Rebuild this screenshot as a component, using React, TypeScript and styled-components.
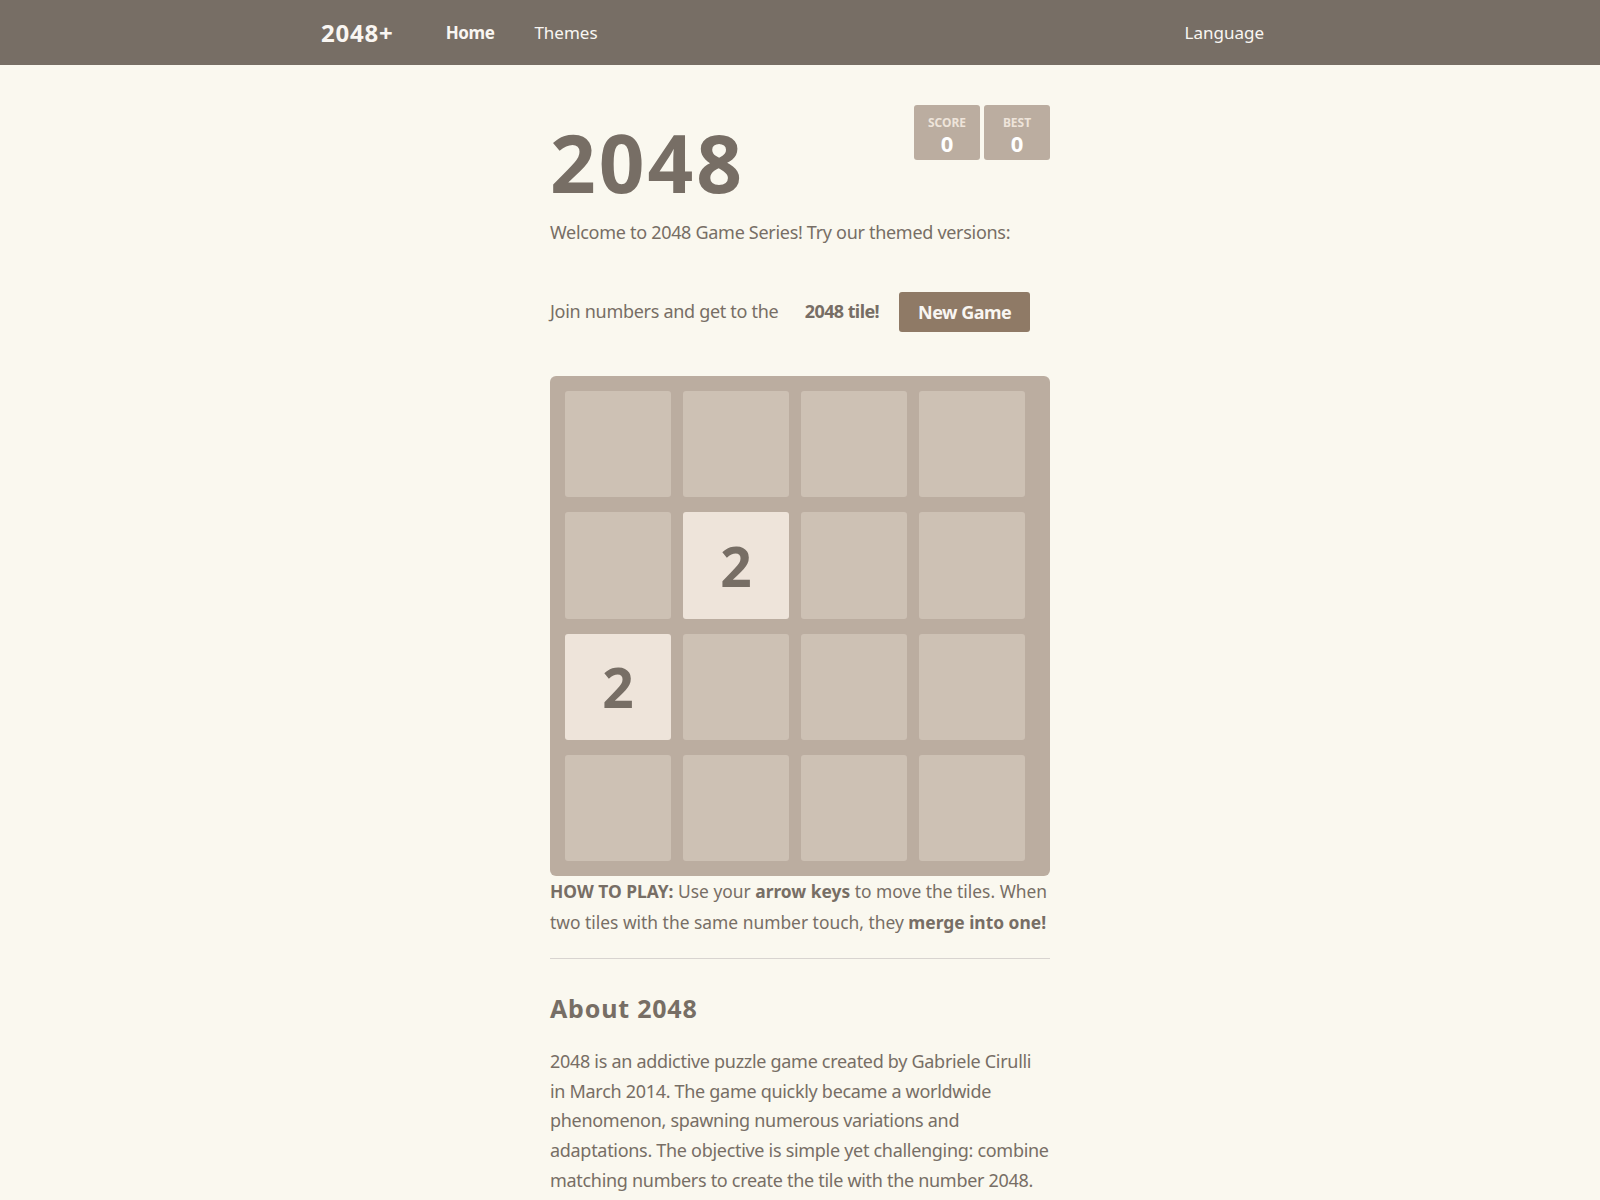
import styled, {createGlobalStyle} from "styled-components";

const GlobalStyle = createGlobalStyle`
    html, body {
        margin: 0;
        padding: 0;
        background: #faf8ef;
        color: #776e65;
        font-family: "Noto Sans", "DejaVu Sans", sans-serif;
        font-size: 18px;
    }

    * {
        box-sizing: border-box;
    }
`

// 0 = empty cell, otherwise the tile value
const BOARD: number[][] = [
    [0, 0, 0, 0],
    [0, 2, 0, 0],
    [2, 0, 0, 0],
    [0, 0, 0, 0],
]

const App = () => {
    return (
        <>
            <GlobalStyle/>
            <StyledNavBar>
                <StyledNavInner>
                    <StyledLogo>2048+</StyledLogo>
                    <StyledNavLinks>
                        <StyledNavLink $active={true}>Home</StyledNavLink>
                        <StyledNavLink $active={false}>Themes</StyledNavLink>
                    </StyledNavLinks>
                    <StyledLangLink>Language</StyledLangLink>
                </StyledNavInner>
            </StyledNavBar>

            <StyledContainer>
                <StyledHeading>
                    <StyledTitle>2048</StyledTitle>
                    <StyledScores>
                        <StyledScoreBox>
                            <StyledScoreLabel>SCORE</StyledScoreLabel>
                            <StyledScoreValue>0</StyledScoreValue>
                        </StyledScoreBox>
                        <StyledScoreBox>
                            <StyledScoreLabel>BEST</StyledScoreLabel>
                            <StyledScoreValue>0</StyledScoreValue>
                        </StyledScoreBox>
                    </StyledScores>
                </StyledHeading>

                <StyledWelcome>Welcome to 2048 Game Series! Try our themed versions:</StyledWelcome>

                <StyledAboveGame>
                    <StyledIntro>
                        Join numbers and get to the <strong>2048 tile!</strong>
                    </StyledIntro>
                    <StyledNewGameBtn>New Game</StyledNewGameBtn>
                </StyledAboveGame>

                <StyledBoard>
                    {
                        BOARD.flat().map((value, idx) => (
                            <StyledCell key={idx} $value={value}>{value > 0 ? value : ""}</StyledCell>
                        ))
                    }
                </StyledBoard>

                <StyledExplanation>
                    <strong>HOW TO PLAY:</strong> Use your <strong>arrow keys</strong> to move the tiles. When two
                    tiles with the same number touch, they <strong>merge into one!</strong>
                </StyledExplanation>

                <StyledDivider/>

                <StyledSectionTitle>About 2048</StyledSectionTitle>
                <StyledParagraph>
                    2048 is an addictive puzzle game created by Gabriele Cirulli in March 2014. The game quickly
                    became a worldwide phenomenon, spawning numerous variations and adaptations. The objective is
                    simple yet challenging: combine matching numbers to create the tile with the number 2048.
                </StyledParagraph>
            </StyledContainer>
        </>
    )
}

export default App

const StyledNavBar = styled.nav`
    width: 100%;
    height: 65px;
    background: #776e65;
`

const StyledNavInner = styled.div`
    display: flex;
    align-items: center;
    width: 960px;
    height: 100%;
    margin: 0 auto;
`

const StyledLogo = styled.div`
    font-size: 24px;
    font-weight: 700;
    letter-spacing: 0.8px;
    color: #f9f6f2;
    margin-left: 1px;
    margin-right: 32px;
`

const StyledNavLinks = styled.div`
    display: flex;
    align-items: center;
    flex: 1;
`

const StyledNavLink = styled.a<{ $active: boolean }>`
    padding: 0 20px;
    font-size: 17px;
    font-weight: ${(props) => props.$active ? 700 : 400};
    letter-spacing: ${(props) => props.$active ? "-0.4px" : "0"};
    color: #f9f6f2;
    cursor: pointer;
`

const StyledLangLink = styled.a`
    padding: 0 16px;
    font-size: 17px;
    color: #f9f6f2;
    cursor: pointer;
`

const StyledContainer = styled.main`
    width: 500px;
    margin: 40px auto 0;
    letter-spacing: -0.3px;
`

const StyledHeading = styled.div`
    display: flex;
    justify-content: space-between;
    align-items: flex-start;
`

const StyledTitle = styled.h1`
    margin: 17px 0 0;
    font-size: 80px;
    font-weight: 700;
    line-height: 1;
    letter-spacing: 3px;
`

const StyledScores = styled.div`
    display: flex;
    gap: 4px;
    letter-spacing: 0;
`

const StyledScoreBox = styled.div`
    display: flex;
    flex-direction: column;
    align-items: center;
    width: 66px;
    height: 55px;
    padding-top: 11px;
    background: #bbada0;
    border-radius: 3px;
`

const StyledScoreLabel = styled.div`
    font-size: 12px;
    font-weight: 700;
    line-height: 14px;
    color: #eee4da;
`

const StyledScoreValue = styled.div`
    font-size: 22px;
    font-weight: 700;
    line-height: 26px;
    color: #ffffff;
`

const StyledWelcome = styled.p`
    margin: 15px 0 0;
    line-height: 30px;
`

const StyledAboveGame = styled.div`
    display: flex;
    align-items: center;
    margin-top: 45px;
    white-space: nowrap;
`

const StyledIntro = styled.p`
    margin: 0 0 3px;
    line-height: 30px;

    strong {
        margin-left: 22px;
        font-weight: 700;
        letter-spacing: -0.6px;
    }
`

const StyledNewGameBtn = styled.button`
    height: 40px;
    margin-left: 20px;
    padding: 0 19px;
    border: none;
    border-radius: 3px;
    background: #8f7a66;
    color: #f9f6f2;
    font-family: inherit;
    font-size: 18px;
    font-weight: 700;
    letter-spacing: -0.5px;
    cursor: pointer;
`

const StyledBoard = styled.div`
    display: grid;
    grid-template-columns: repeat(4, 106px);
    grid-auto-rows: 106.25px;
    column-gap: 12px;
    row-gap: 15px;
    width: 500px;
    height: 500px;
    margin-top: 44px;
    padding: 15px;
    background: #bbada0;
    border-radius: 6px;
`

const StyledCell = styled.div<{ $value: number }>`
    display: flex;
    align-items: center;
    justify-content: center;
    border-radius: 3px;
    background: ${(props) => props.$value === 2 ? "#eee4da" : "#cdc1b4"};
    font-size: 55px;
    font-weight: 700;
    letter-spacing: 0;
    color: #776e65;
`

const StyledExplanation = styled.p`
    margin: 0;
    font-size: 17.4px;
    line-height: 31px;
    letter-spacing: 0;

    strong {
        font-weight: 700;
    }
`

const StyledDivider = styled.hr`
    margin: 20px 0 0;
    border: none;
    border-top: 1px solid #d8d4d0;
`

const StyledSectionTitle = styled.h2`
    margin: 34px 0 0;
    font-size: 25px;
    font-weight: 700;
    line-height: 30px;
    letter-spacing: 0.8px;
`

const StyledParagraph = styled.p`
    margin: 24px 0 0;
    line-height: 29.7px;
`
